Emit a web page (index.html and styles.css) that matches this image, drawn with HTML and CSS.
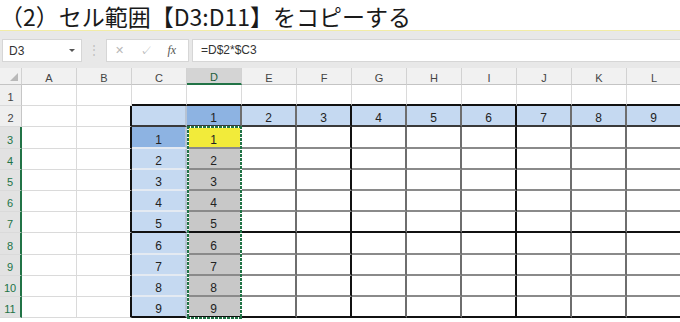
FILE: index.html
```html
<!DOCTYPE html>
<html lang="ja">
<head>
<meta charset="UTF-8" />
<meta name="viewport" content="width=device-width, initial-scale=1" />
<title>セル範囲をコピーする</title>
<link rel="stylesheet" href="styles.css">
</head>
<body>

<div class="title">（2）セル範囲【D3:D11】をコピーする</div>

<div class="fbar">
  <div class="namebox"><span>D3</span><span class="caret"></span></div>
  <div class="grip">⋮</div>
  <div class="btns"><span class="x">✕</span><span class="ok">✓</span><span class="fx">fx</span></div>
  <div class="formula">=D$2*$C3</div>
</div>

<div class="sheet">
  <div class="row hdr">
    <div class="cr"></div>
    <div>A</div><div>B</div><div>C</div><div class="s">D</div><div>E</div><div>F</div>
    <div>G</div><div>H</div><div>I</div><div>J</div><div>K</div><div>L</div>
  </div>
  <div class="row r1">
    <div class="rh">1</div>
    <div></div><div></div><div></div><div></div><div></div><div></div>
    <div></div><div></div><div></div><div></div><div></div><div></div>
  </div>
  <div class="row tb r2">
    <div class="rh">2</div>
    <div></div><div></div>
    <div class="h cc"></div><div class="hs">1</div><div class="h">2</div><div class="h">3</div>
    <div class="h">4</div><div class="h">5</div><div class="h">6</div><div class="h">7</div><div class="h">8</div><div class="h">9</div>
  </div>
  <div class="row tb">
    <div class="rh s">3</div>
    <div></div><div></div>
    <div class="hs cc">1</div><div class="y">1</div><div></div><div></div>
    <div></div><div></div><div></div><div></div><div></div><div></div>
  </div>
  <div class="row tb">
    <div class="rh s">4</div>
    <div></div><div></div>
    <div class="h cc">2</div><div class="g">2</div><div></div><div></div>
    <div></div><div></div><div></div><div></div><div></div><div></div>
  </div>
  <div class="row tb">
    <div class="rh s">5</div>
    <div></div><div></div>
    <div class="h cc">3</div><div class="g">3</div><div></div><div></div>
    <div></div><div></div><div></div><div></div><div></div><div></div>
  </div>
  <div class="row tb">
    <div class="rh s">6</div>
    <div></div><div></div>
    <div class="h cc">4</div><div class="g">4</div><div></div><div></div>
    <div></div><div></div><div></div><div></div><div></div><div></div>
  </div>
  <div class="row tb r7">
    <div class="rh s">7</div>
    <div></div><div></div>
    <div class="h cc">5</div><div class="g">5</div><div></div><div></div>
    <div></div><div></div><div></div><div></div><div></div><div></div>
  </div>
  <div class="row tb">
    <div class="rh s">8</div>
    <div></div><div></div>
    <div class="h cc">6</div><div class="g">6</div><div></div><div></div>
    <div></div><div></div><div></div><div></div><div></div><div></div>
  </div>
  <div class="row tb">
    <div class="rh s">9</div>
    <div></div><div></div>
    <div class="h cc">7</div><div class="g">7</div><div></div><div></div>
    <div></div><div></div><div></div><div></div><div></div><div></div>
  </div>
  <div class="row tb">
    <div class="rh s">10</div>
    <div></div><div></div>
    <div class="h cc">8</div><div class="g">8</div><div></div><div></div>
    <div></div><div></div><div></div><div></div><div></div><div></div>
  </div>
  <div class="row tb r11">
    <div class="rh s">11</div>
    <div></div><div></div>
    <div class="h cc">9</div><div class="g">9</div><div></div><div></div>
    <div></div><div></div><div></div><div></div><div></div><div></div>
  </div>

  <!-- copy marquee over D3:D11 -->
  <div class="ants"></div>
</div>

</body>
</html>
```

FILE: styles.css
```css
body {
  margin: 0;
  width: 680px;
  height: 322px;
  overflow: hidden;
  background: #fff;
  font-family: "Liberation Sans", Arial, sans-serif;
  color: #222;
}

.title {
  box-sizing: border-box;
  height: 31px;
  padding-top: 2px;
  line-height: 28px;
  font-family: "Noto Sans CJK JP", sans-serif;
  font-size: 23px;
  color: #1a1a1a;
  white-space: nowrap;
  border-bottom: 1px solid #f2eca6;
}

/* formula bar */
.fbar {
  display: flex;
  align-items: flex-start;
  box-sizing: border-box;
  height: 37px;
  padding: 8px 0 0 2px;
  background: #e8e8e8;
}
.namebox, .btns, .formula {
  box-sizing: border-box;
  height: 23px;
  background: #fff;
  border: 1px solid #d6d6d6;
  font-size: 12px;
  color: #333;
}
.namebox {
  width: 80px;
  display: flex;
  align-items: center;
  justify-content: space-between;
  padding: 0 6px 0 6px;
}
.caret {
  width: 0;
  height: 0;
  border-left: 3px solid transparent;
  border-right: 3px solid transparent;
  border-top: 3px solid #555;
}
.grip {
  width: 24px;
  text-align: center;
  line-height: 22px;
  color: #c0c0c0;
  font-size: 12px;
}
.btns {
  width: 83px;
  display: flex;
  align-items: center;
  justify-content: space-around;
  padding: 0 4px 0 0;
  color: #b8b8b8;
}
.btns .x { font-size: 11px; }
.btns .ok { font-size: 12px; }
.btns .fx {
  font-family: "Liberation Serif", serif;
  font-style: italic;
  font-size: 12px;
  color: #555;
}
.formula {
  flex: 1;
  margin-left: 3px;
  line-height: 21px;
  padding-left: 8px;
  border-right: none;
}

/* sheet grid */
.sheet {
  position: relative;
  display: grid;
  grid-template-columns: 22px repeat(12, 55px);
  grid-template-rows: 17px repeat(11, 21.2px);
  background: #fff;
}
.row {
  display: contents;
}
.row > div {
  box-sizing: border-box;
  display: flex;
  align-items: flex-end;
  justify-content: center;
  border-right: 1px solid #dadada;
  border-bottom: 1px solid #dadada;
  font-size: 12px;
  line-height: 12px;
  padding-bottom: 1px;
  color: #222;
}

.hdr > div {
  background: #f1f1f1;
  border-right-color: #d2d2d2;
  border-bottom-color: #c4c4c4;
  align-items: center;
  padding: 3px 0 0;
  font-size: 11px;
  color: #444;
}
.hdr > .s {
  background: #d4d4d4;
  border-bottom: 2px solid #217346;
  color: #1d5e39;
}
.hdr > .cr {
  position: relative;
}
.hdr > .cr::after {
  content: "";
  position: absolute;
  right: 3px;
  bottom: 3px;
  border-left: 8px solid transparent;
  border-bottom: 8px solid #b9b9b9;
}

.row > .rh {
  background: #efefef;
  border-right-color: #c6c6c6;
  font-size: 11px;
  color: #444;
  padding-bottom: 2px;
}
.row > .rh.s {
  background: #e2e2e2;
  border-right: 2px solid #217346;
  color: #217346;
}

/* the multiplication table */
.r1 > div:nth-child(n+4) {
  border-bottom: 2px solid #111;
}
.tb > div:nth-child(3) {
  border-right: 2px solid #111;
}
.tb > div:nth-child(n+4) {
  border-right: 2px solid #6e6e6e;
  border-bottom: 2px solid #8a8a8a;
}
.tb > div.h, .tb > div.hs {
  background: #c5d9f1;
}
.tb > div.hs {
  background: #8db3e2;
}
.tb > div.cc {
  border-right-color: #b7c3d3;
  border-bottom-color: #e4eaf2;
}
.tb > div.y {
  background: #f2eb3a;
}
.tb > div.g {
  background: #c8c8c8;
}
.tb > div:nth-child(7),
.tb > div:nth-child(10) {
  border-right-color: #111;
}
.r2 > div:nth-child(n+4) {
  border-bottom-color: #3a3a3a;
}
.r7 > div:nth-child(n+4),
.r11 > div:nth-child(n+4) {
  border-bottom-color: #111;
}

.ants {
  position: absolute;
  left: 187px;
  top: 58px;
  width: 55px;
  height: 193px;
  box-sizing: border-box;
  background:
    repeating-linear-gradient(90deg, #217346 0 3px, #fff 3px 4px) top / 100% 2px no-repeat,
    repeating-linear-gradient(90deg, #217346 0 3px, #fff 3px 4px) bottom / 100% 2px no-repeat,
    repeating-linear-gradient(180deg, #217346 0 3px, #fff 3px 4px) left / 2px 100% no-repeat,
    repeating-linear-gradient(180deg, #217346 0 3px, #fff 3px 4px) right / 2px 100% no-repeat;
}
```
